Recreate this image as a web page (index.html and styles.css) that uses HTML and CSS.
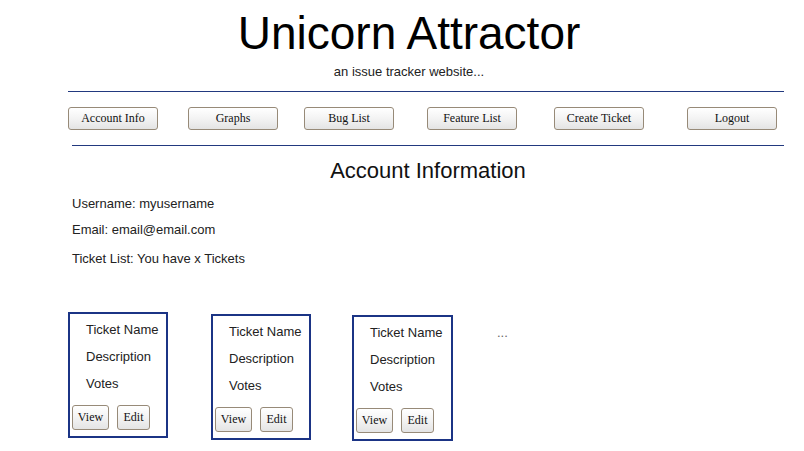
FILE: index.html
```html
<!DOCTYPE html>
<html lang="en">
<head>
<meta charset="utf-8">
<title>Unicorn Attractor</title>
<link rel="stylesheet" href="styles.css">
</head>
<body>
<header class="site-header">
  <h1 class="site-title">Unicorn Attractor</h1>
  <p class="site-tagline">an issue tracker website...</p>
</header>
<hr class="rule rule-top">
<nav class="main-nav">
  <button class="nav-btn" type="button">Account Info</button>
  <button class="nav-btn" type="button">Graphs</button>
  <button class="nav-btn" type="button">Bug List</button>
  <button class="nav-btn" type="button">Feature List</button>
  <button class="nav-btn" type="button">Create Ticket</button>
  <button class="nav-btn" type="button">Logout</button>
</nav>
<hr class="rule rule-bottom">
<main class="content">
  <section class="account">
    <h2 class="account-title">Account Information</h2>
    <p class="account-line">Username: myusername</p>
    <p class="account-line">Email: email@email.com</p>
    <p class="account-line account-line-last">Ticket List: You have x Tickets</p>
  </section>
  <section class="tickets">
    <div class="ticket">
      <div class="ticket-line">Ticket Name</div>
      <div class="ticket-line">Description</div>
      <div class="ticket-line">Votes</div>
      <div class="ticket-actions">
        <button class="small-btn btn-view" type="button">View</button>
        <button class="small-btn btn-edit" type="button">Edit</button>
      </div>
    </div>
    <div class="ticket ticket-second">
      <div class="ticket-line">Ticket Name</div>
      <div class="ticket-line">Description</div>
      <div class="ticket-line">Votes</div>
      <div class="ticket-actions">
        <button class="small-btn btn-view" type="button">View</button>
        <button class="small-btn btn-edit" type="button">Edit</button>
      </div>
    </div>
    <div class="ticket ticket-third">
      <div class="ticket-line">Ticket Name</div>
      <div class="ticket-line">Description</div>
      <div class="ticket-line">Votes</div>
      <div class="ticket-actions">
        <button class="small-btn btn-view" type="button">View</button>
        <button class="small-btn btn-edit" type="button">Edit</button>
      </div>
    </div>
    <div class="more">...</div>
  </section>
</main>
</body>
</html>
```

FILE: styles.css
```css
html, body {
  background: #ffffff;
}

body {
  margin: 8px;
  font-family: "Liberation Sans", Arial, sans-serif;
  color: #222222;
}

.site-header {
  text-align: center;
  padding-left: 14px;
}

.site-title {
  margin: 0;
  font-size: 46px;
  line-height: 51px;
  font-weight: normal;
  color: #000000;
}

.site-tagline {
  margin: 5px 0 0;
  font-size: 13px;
  line-height: 15px;
}

.rule {
  border: 0;
  height: 1px;
  background: #22397f;
  margin-right: 12px;
}

.rule-top {
  margin-top: 12px;
  margin-bottom: 0;
  margin-left: 60px;
}

.rule-bottom {
  margin-top: 15px;
  margin-bottom: 0;
  margin-left: 64px;
}

.main-nav {
  display: grid;
  grid-template-columns: 120px 116px 123px 127px 133px 90px;
  margin: 15px 0 0 60px;
}

.nav-btn,
.small-btn {
  font-family: "Liberation Serif", "Times New Roman", serif;
  font-size: 12px;
  color: #111111;
  border: 1px solid #978a78;
  border-radius: 3px;
  background: linear-gradient(#ffffff, #f3f3f3 50%, #e4e4e4);
  padding: 0;
  margin: 0;
}

.nav-btn {
  width: 90px;
  height: 23px;
}

.content {
  margin-left: 60px;
  margin-right: 12px;
}

.account {
  padding-left: 4px;
}

.account-title {
  margin: 12px 0 0;
  font-size: 22px;
  line-height: 25px;
  font-weight: normal;
  text-align: center;
  color: #111111;
}

.account-line {
  margin: 0 0 11px;
  font-size: 13px;
  line-height: 15px;
}

.account-title + .account-line {
  margin-top: 13px;
}

.account-line-last {
  margin-top: 14px;
}

.tickets {
  display: flex;
  align-items: flex-start;
  gap: 42px;
  margin-top: 46px;
}

.ticket {
  width: 96px;
  border: 2px solid #1b3485;
  padding: 2px 0 6px;
}

.ticket-second {
  margin-top: 2px;
  margin-left: 1px;
}

.ticket-third {
  margin-top: 3px;
  margin-left: -1px;
  width: 97px;
}

.ticket-line {
  font-size: 13px;
  line-height: 27px;
  padding-left: 16px;
  white-space: nowrap;
}

.ticket-actions {
  display: flex;
  gap: 8px;
  margin: 8px 0 0 2px;
}

.small-btn {
  height: 25px;
}

.btn-view {
  width: 37px;
}

.btn-edit {
  width: 33px;
}

.more {
  font-size: 13px;
  line-height: 15px;
  color: #666666;
  margin-top: 13px;
  margin-left: 2px;
}
```
